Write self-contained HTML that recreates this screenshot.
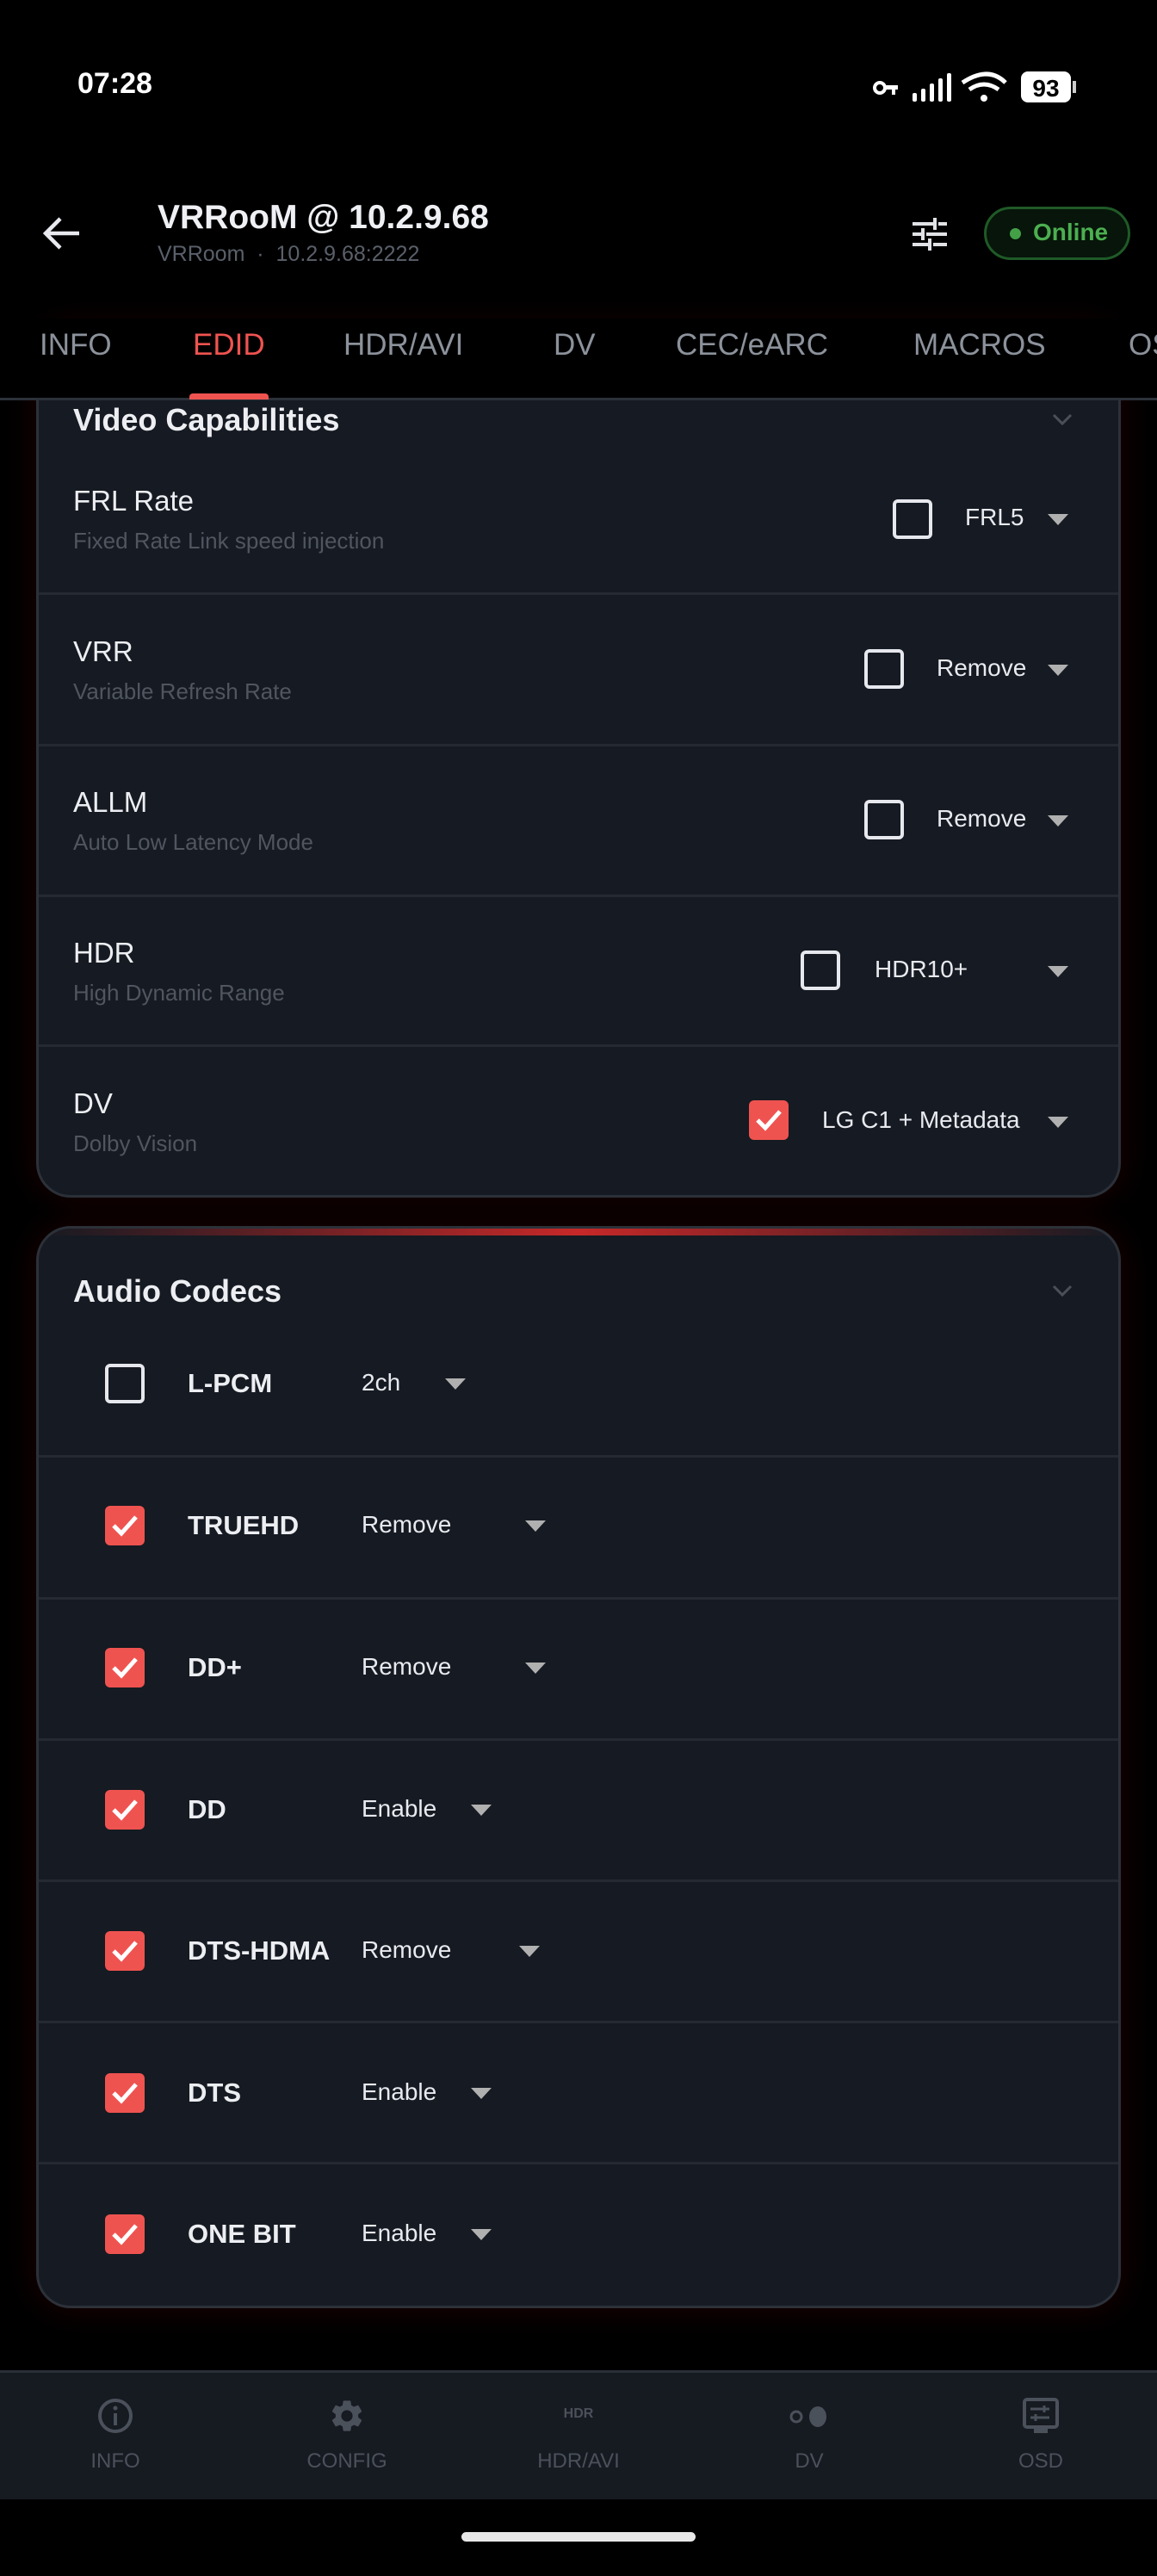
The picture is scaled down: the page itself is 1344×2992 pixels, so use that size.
<!DOCTYPE html>
<html><head><meta charset="utf-8"><style>
*{margin:0;padding:0;box-sizing:border-box}
body{width:1344px;height:2992px;background:#000;position:relative;overflow:hidden;font-family:"Liberation Sans",sans-serif;color:#e8eaef}
.a{position:absolute;white-space:nowrap}
.card{position:absolute;left:42px;width:1260px;background:#161a22;border:3px solid #2c3139;border-radius:40px;box-shadow:0 0 40px rgba(120,0,0,.25)}
.sep{position:absolute;left:45px;width:1254px;height:3px;background:#252a32}
.cb{position:absolute;width:46px;height:46px;border:4px solid #e6e8ee;border-radius:6px}
.cb.on{background:#ef5350;border:none}
.cb.on svg{position:absolute;left:7px;top:8px}
.tri{position:absolute;width:0;height:0;border-left:12px solid transparent;border-right:12px solid transparent;border-top:13px solid #b0b0b0}
.t{font-size:33px;color:#eceef2}
.s{font-size:26px;color:#50565f}
.v{font-size:28px;color:#e8eaef}
.lab{font-size:31px;font-weight:bold;color:#eceef2}
.tab{font-size:35px;color:#8c929b;top:381px}
.nl{font-size:24px;color:#4b515b;top:2845px;transform:translateX(-50%)}
.h{font-size:36px;font-weight:bold;color:#eceef2}
</style></head><body>
<!-- card 1 -->
<div class="card" style="top:380px;height:1011px"></div>
<div class="a" style="left:0;top:370px;width:1344px;height:94px;background:#000"></div>
<div class="a" style="left:0;top:462px;width:1344px;height:3px;background:#2c3139"></div>
<div class="a" style="left:220px;top:457px;width:92px;height:7px;background:#ef5350;border-radius:4px 4px 0 0"></div>

<div class="a" style="left:90px;top:78px;font-size:34px;font-weight:bold;color:#fff">07:28</div>
<svg class="a" style="left:1010px;top:82px" width="250" height="40" viewBox="0 0 250 40">
<circle cx="12" cy="20" r="6" fill="none" stroke="#fff" stroke-width="4"/><rect x="17" y="17" width="16" height="5" fill="#fff"/><rect x="26" y="20" width="4" height="8" fill="#fff"/>
<rect x="50" y="26" width="5" height="10" rx="2" fill="#fff"/><rect x="60" y="21" width="5" height="15" rx="2" fill="#fff"/><rect x="70" y="15" width="5" height="21" rx="2" fill="#fff"/><rect x="80" y="9" width="5" height="27" rx="2" fill="#fff"/><rect x="90" y="3" width="5" height="33" rx="2" fill="#fff"/>
<path d="M108 14 Q138 -6 158 14" stroke="#fff" stroke-width="5" fill="none"/><path d="M116 22 Q133 10 150 22" stroke="#fff" stroke-width="5" fill="none"/><circle cx="133" cy="32" r="4" fill="#fff"/>
<rect x="176" y="1" width="58" height="36" rx="8" fill="#fff"/><rect x="236" y="12" width="4" height="14" fill="#ccc"/>
<text x="205" y="30" font-size="28" font-weight="bold" text-anchor="middle" fill="#000" font-family="Liberation Sans">93</text>
</svg>
<svg class="a" style="left:48px;top:250px" width="46" height="42" viewBox="0 0 46 42"><path d="M44 21H6M22 4L5 21l17 17" stroke="#e8eaef" stroke-width="4.5" fill="none"/></svg>
<div class="a" style="left:183px;top:231px;font-size:39px;font-weight:bold;color:#eef0f4">VRRooM @ 10.2.9.68</div>
<div class="a" style="left:183px;top:281px;font-size:25px;color:#5a606a">VRRoom &nbsp;·&nbsp; 10.2.9.68:2222</div>
<svg class="a" style="left:1058px;top:250px" width="44" height="44" viewBox="0 0 44 44" fill="#e0e2e6"><rect x="2" y="8" width="24" height="4"/><rect x="32" y="8" width="10" height="4"/><rect x="26" y="3" width="4" height="14"/><rect x="2" y="20" width="10" height="4"/><rect x="18" y="20" width="24" height="4"/><rect x="12" y="15" width="4" height="14"/><rect x="2" y="32" width="18" height="4"/><rect x="26" y="32" width="16" height="4"/><rect x="20" y="27" width="4" height="14"/></svg>
<div class="a" style="left:1143px;top:240px;width:170px;height:62px;border:3px solid #1f5a27;border-radius:31px;background:#07150a"></div>
<div class="a" style="left:1173px;top:265px;width:13px;height:13px;border-radius:50%;background:#43a047"></div>
<div class="a" style="left:1200px;top:254px;font-size:28px;font-weight:bold;color:#4caf50">Online</div>
<div class="a tab" style="left:46px">INFO</div>
<div class="a tab" style="left:224px;color:#ef5350">EDID</div>
<div class="a tab" style="left:399px">HDR/AVI</div>
<div class="a tab" style="left:643px">DV</div>
<div class="a tab" style="left:785px">CEC/eARC</div>
<div class="a tab" style="left:1061px">MACROS</div>
<div class="a tab" style="left:1311px">OSD</div>

<div class="a" style="left:42px;top:465px;width:1260px;height:10px;background:#161a22;border-left:3px solid #2c3139;border-right:3px solid #2c3139"></div>
<div class="a h" style="left:85px;top:467px">Video Capabilities</div>
<svg class="a" style="left:1222px;top:480px" width="24" height="16"><path d="M2 2l10 10 10-10" stroke="#4a5059" stroke-width="3" fill="none"/></svg>

<div class="a t" style="left:85px;top:563px">FRL Rate</div><div class="a s" style="left:85px;top:613px">Fixed Rate Link speed injection</div>
<div class="cb" style="left:1037px;top:580px"></div><div class="a v" style="left:1121px;top:585px">FRL5</div><div class="tri" style="left:1217px;top:597px"></div>
<div class="sep" style="top:688px"></div>
<div class="a t" style="left:85px;top:738px">VRR</div><div class="a s" style="left:85px;top:788px">Variable Refresh Rate</div>
<div class="cb" style="left:1004px;top:754px"></div><div class="a v" style="left:1088px;top:760px">Remove</div><div class="tri" style="left:1217px;top:772px"></div>
<div class="sep" style="top:864px"></div>
<div class="a t" style="left:85px;top:913px">ALLM</div><div class="a s" style="left:85px;top:963px">Auto Low Latency Mode</div>
<div class="cb" style="left:1004px;top:929px"></div><div class="a v" style="left:1088px;top:935px">Remove</div><div class="tri" style="left:1217px;top:947px"></div>
<div class="sep" style="top:1039px"></div>
<div class="a t" style="left:85px;top:1088px">HDR</div><div class="a s" style="left:85px;top:1138px">High Dynamic Range</div>
<div class="cb" style="left:930px;top:1104px"></div><div class="a v" style="left:1016px;top:1110px">HDR10+</div><div class="tri" style="left:1217px;top:1122px"></div>
<div class="sep" style="top:1213px"></div>
<div class="a t" style="left:85px;top:1263px">DV</div><div class="a s" style="left:85px;top:1313px">Dolby Vision</div>
<div class="cb on" style="left:870px;top:1278px"><svg width="32" height="30"><path d="M3 15l9 9L29 5" stroke="#fff" stroke-width="5" fill="none"/></svg></div><div class="a v" style="left:955px;top:1285px">LG C1 + Metadata</div><div class="tri" style="left:1217px;top:1297px"></div>

<!-- card 2 -->
<div class="card" style="top:1424px;height:1257px;overflow:hidden"><div style="position:absolute;left:0;top:0;width:100%;height:8px;background:linear-gradient(90deg,transparent,#c62828 50%,transparent)"></div></div>
<div class="a h" style="left:85px;top:1479px">Audio Codecs</div>
<svg class="a" style="left:1222px;top:1492px" width="24" height="16"><path d="M2 2l10 10 10-10" stroke="#4a5059" stroke-width="3" fill="none"/></svg>

<div class="cb" style="left:122px;top:1584px"></div><div class="a lab" style="left:218px;top:1589px">L-PCM</div><div class="a v" style="left:420px;top:1590px">2ch</div><div class="tri" style="left:517px;top:1601px"></div>
<div class="sep" style="top:1690px"></div>
<div class="cb on" style="left:122px;top:1749px"><svg width="32" height="30"><path d="M3 15l9 9L29 5" stroke="#fff" stroke-width="5" fill="none"/></svg></div><div class="a lab" style="left:218px;top:1754px">TRUEHD</div><div class="a v" style="left:420px;top:1755px">Remove</div><div class="tri" style="left:610px;top:1766px"></div>
<div class="sep" style="top:1855px"></div>
<div class="cb on" style="left:122px;top:1914px"><svg width="32" height="30"><path d="M3 15l9 9L29 5" stroke="#fff" stroke-width="5" fill="none"/></svg></div><div class="a lab" style="left:218px;top:1919px">DD+</div><div class="a v" style="left:420px;top:1920px">Remove</div><div class="tri" style="left:610px;top:1931px"></div>
<div class="sep" style="top:2019px"></div>
<div class="cb on" style="left:122px;top:2079px"><svg width="32" height="30"><path d="M3 15l9 9L29 5" stroke="#fff" stroke-width="5" fill="none"/></svg></div><div class="a lab" style="left:218px;top:2084px">DD</div><div class="a v" style="left:420px;top:2085px">Enable</div><div class="tri" style="left:547px;top:2096px"></div>
<div class="sep" style="top:2183px"></div>
<div class="cb on" style="left:122px;top:2243px"><svg width="32" height="30"><path d="M3 15l9 9L29 5" stroke="#fff" stroke-width="5" fill="none"/></svg></div><div class="a lab" style="left:218px;top:2248px">DTS-HDMA</div><div class="a v" style="left:420px;top:2249px">Remove</div><div class="tri" style="left:603px;top:2260px"></div>
<div class="sep" style="top:2347px"></div>
<div class="cb on" style="left:122px;top:2408px"><svg width="32" height="30"><path d="M3 15l9 9L29 5" stroke="#fff" stroke-width="5" fill="none"/></svg></div><div class="a lab" style="left:218px;top:2413px">DTS</div><div class="a v" style="left:420px;top:2414px">Enable</div><div class="tri" style="left:547px;top:2425px"></div>
<div class="sep" style="top:2511px"></div>
<div class="cb on" style="left:122px;top:2572px"><svg width="32" height="30"><path d="M3 15l9 9L29 5" stroke="#fff" stroke-width="5" fill="none"/></svg></div><div class="a lab" style="left:218px;top:2577px">ONE BIT</div><div class="a v" style="left:420px;top:2578px">Enable</div><div class="tri" style="left:547px;top:2589px"></div>

<!-- bottom nav -->
<div class="a" style="left:0;top:2753px;width:1344px;height:150px;background:#161a21;border-top:3px solid #2a2f37"></div>
<svg class="a" style="left:112px;top:2784px" width="44" height="44"><circle cx="22" cy="22" r="18" stroke="#4b515b" stroke-width="4" fill="none"/><rect x="20" y="19" width="4" height="14" fill="#4b515b"/><circle cx="22" cy="13" r="2.5" fill="#4b515b"/></svg>
<svg class="a" style="left:381px;top:2784px" width="44" height="44" viewBox="0 0 24 24"><path fill="#4b515b" d="M19.14 12.94c.04-.3.06-.61.06-.94 0-.32-.02-.64-.07-.94l2.030-1.58a.49.49 0 0 0 .12-.61l-1.92-3.32a.49.49 0 0 0-.59-.22l-2.39.96c-.5-.38-1.030-.7-1.62-.94l-.36-2.54a.48.48 0 0 0-.48-.41h-3.84c-.24 0-.43.17-.47.41l-.36 2.54c-.59.24-1.13.57-1.62.94l-2.39-.96a.48.48 0 0 0-.59.22L2.74 8.87c-.12.21-.08.47.12.61l2.030 1.58c-.05.3-.09.63-.09.94s.02.64.07.94l-2.030 1.58a.49.49 0 0 0-.12.61l1.92 3.32c.12.22.37.29.59.22l2.39-.96c.5.38 1.030.7 1.62.94l.36 2.54c.05.24.24.41.48.41h3.84c.24 0 .44-.17.47-.41l.36-2.54c.59-.24 1.13-.56 1.62-.94l2.39.96c.22.08.47 0 .59-.22l1.92-3.32c.12-.22.07-.47-.12-.61l-2.010-1.58zM12 15.6A3.6 3.6 0 1 1 12 8.4a3.6 3.6 0 0 1 0 7.2z"/></svg>
<div class="a" style="left:672px;top:2795px;transform:translateX(-50%);font-size:16px;font-weight:bold;color:#4b515b">HDR</div>
<svg class="a" style="left:915px;top:2792px" width="50" height="30"><circle cx="10" cy="15" r="6" stroke="#4b515b" stroke-width="3" fill="none"/><ellipse cx="35" cy="15" rx="10" ry="12" fill="#4b515b"/></svg>
<svg class="a" style="left:1187px;top:2784px" width="44" height="46"><rect x="3" y="3" width="38" height="32" rx="3" stroke="#4b515b" stroke-width="4" fill="none"/><rect x="14" y="35" width="16" height="7" fill="#4b515b"/><path d="M10 14h22M26 10v8M10 24h22M16 20v8" stroke="#4b515b" stroke-width="3"/></svg>
<div class="a nl" style="left:134px">INFO</div>
<div class="a nl" style="left:403px">CONFIG</div>
<div class="a nl" style="left:672px">HDR/AVI</div>
<div class="a nl" style="left:940px">DV</div>
<div class="a nl" style="left:1209px">OSD</div>
<div class="a" style="left:536px;top:2941px;width:272px;height:11px;border-radius:6px;background:#e8e8e8"></div>
</body></html>
